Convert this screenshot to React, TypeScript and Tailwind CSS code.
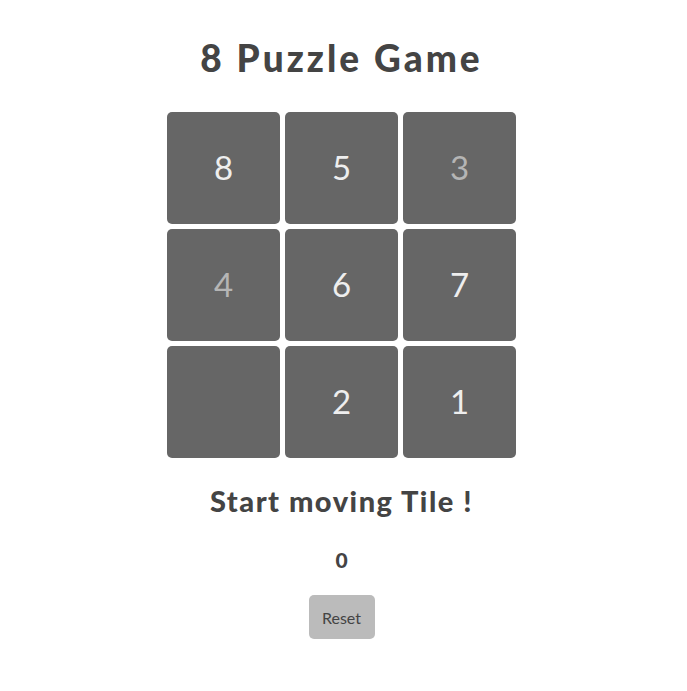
import React from "react";

const tiles: { v: number | null; ok: boolean }[] = [
  { v: 8, ok: false },
  { v: 5, ok: false },
  { v: 3, ok: true },
  { v: 4, ok: true },
  { v: 6, ok: false },
  { v: 7, ok: false },
  { v: null, ok: false },
  { v: 2, ok: false },
  { v: 1, ok: false },
];

export default function App() {
  return (
    <div
      className="min-h-[691px] bg-white flex flex-col items-center pr-[4px] text-[#444]"
      style={{ fontFamily: "Lato, 'Open Sans', sans-serif" }}
    >
      <h1 className="mt-[36px] text-[37px] leading-[43px] font-black tracking-[3px]">8 Puzzle Game</h1>
      <div className="mt-[33px] grid grid-cols-[113px_113px_113px] grid-rows-[112px_112px_112px] gap-[5px]">
        {tiles.map((t, i) => (
          <div
            key={i}
            className={
              "rounded-[5px] bg-[#666] flex items-center justify-center text-[33px] " +
              (t.ok ? "text-[#b5b5b5]" : "text-[#eee]")
            }
          >
            {t.v ?? ""}
          </div>
        ))}
      </div>
      <div className="mt-[26px] text-[29px] leading-[34px] font-black tracking-[1.5px]">Start moving Tile !</div>
      <div className="mt-[30px] text-[21px] leading-[24px] font-black">0</div>
      <button className="mt-[23px] w-[66px] h-[44px] rounded-[5px] bg-[#bbb] text-[16px] text-[#444] pt-[2px]">
        Reset
      </button>
    </div>
  );
}
